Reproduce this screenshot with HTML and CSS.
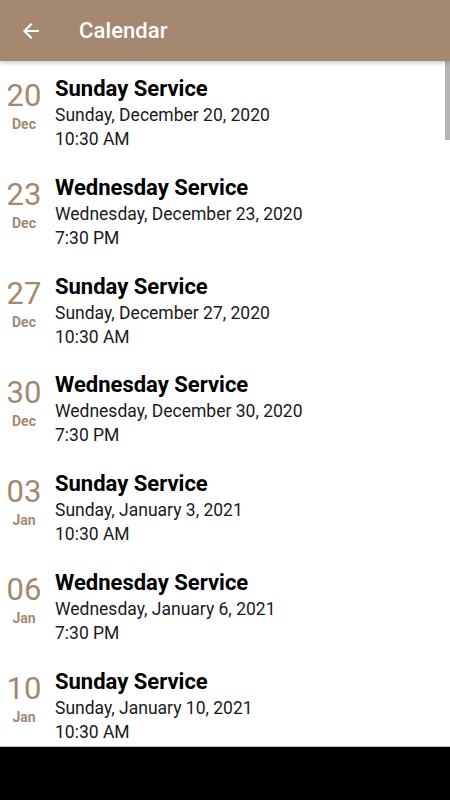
FILE: index.html
```html
<!DOCTYPE html>
<html>
<head>
<meta charset="utf-8">
<link rel="stylesheet" href="styles.css">
</head>
<body>
<div class="app">
  <header class="appbar">
    <svg class="back" viewBox="0 0 24 24" width="24" height="24"><path d="M20 11H7.83l5.59-5.59L12 4l-8 8 8 8 1.41-1.41L7.83 13H20v-2z" fill="#fff"/></svg>
    <h1 class="title">Calendar</h1>
  </header>
  <main class="list">
    <div class="scrollbar"></div>
    <div class="event">
      <div class="date"><div class="day">20</div><div class="mon">Dec</div></div>
      <div class="info"><div class="name">Sunday Service</div><div class="line">Sunday, December 20, 2020</div><div class="line">10:30 AM</div></div>
    </div>
    <div class="event">
      <div class="date"><div class="day">23</div><div class="mon">Dec</div></div>
      <div class="info"><div class="name">Wednesday Service</div><div class="line">Wednesday, December 23, 2020</div><div class="line">7:30 PM</div></div>
    </div>
    <div class="event">
      <div class="date"><div class="day">27</div><div class="mon">Dec</div></div>
      <div class="info"><div class="name">Sunday Service</div><div class="line">Sunday, December 27, 2020</div><div class="line">10:30 AM</div></div>
    </div>
    <div class="event">
      <div class="date"><div class="day">30</div><div class="mon">Dec</div></div>
      <div class="info"><div class="name">Wednesday Service</div><div class="line">Wednesday, December 30, 2020</div><div class="line">7:30 PM</div></div>
    </div>
    <div class="event">
      <div class="date"><div class="day">03</div><div class="mon">Jan</div></div>
      <div class="info"><div class="name">Sunday Service</div><div class="line">Sunday, January 3, 2021</div><div class="line">10:30 AM</div></div>
    </div>
    <div class="event">
      <div class="date"><div class="day">06</div><div class="mon">Jan</div></div>
      <div class="info"><div class="name">Wednesday Service</div><div class="line">Wednesday, January 6, 2021</div><div class="line">7:30 PM</div></div>
    </div>
    <div class="event">
      <div class="date"><div class="day">10</div><div class="mon">Jan</div></div>
      <div class="info"><div class="name">Sunday Service</div><div class="line">Sunday, January 10, 2021</div><div class="line">10:30 AM</div></div>
    </div>
  </main>
  <div class="navbar"></div>
</div>
</body>
</html>
```
FILE: styles.css
```css
* { box-sizing: border-box; margin: 0; padding: 0; }
html, body { width: 450px; height: 800px; overflow: hidden; background: #fff; }
body { font-family: Roboto, "Noto Sans", sans-serif; }
.app { display: flex; flex-direction: column; height: 800px; }
.appbar {
  height: 61px; flex: 0 0 61px;
  background: #a48870;
  display: flex; align-items: center;
  padding-left: 19px;
  box-shadow: 0 2px 4px rgba(0,0,0,0.22);
  position: relative; z-index: 2;
}
.back { display: block; margin-right: 36px; }
.title { color: #fff; font-size: 22px; font-weight: 500; letter-spacing: 0.1px; }
.list { flex: 1; position: relative; overflow: hidden; }
.scrollbar { position: absolute; right: 0; top: 0; width: 5px; height: 79px; background: #b5b5b5; }
.event { display: flex; height: 98.8px; padding-top: 13px; }
.date { width: 48px; flex: 0 0 48px; text-align: center; color: #a5896f; margin-top: 5.4px; margin-right: 7px; }
.day { font-size: 31px; line-height: 34px; font-weight: 400; }
.mon { font-size: 14px; line-height: 22px; font-weight: 700; }
.name { font-size: 22px; line-height: 29px; font-weight: 700; color: #000; }
.line { font-size: 17.5px; line-height: 24px; color: #1a1a1a; }
.navbar { height: 54px; flex: 0 0 54px; background: #000; border-top: 1px solid #bdbdbd; }
```
